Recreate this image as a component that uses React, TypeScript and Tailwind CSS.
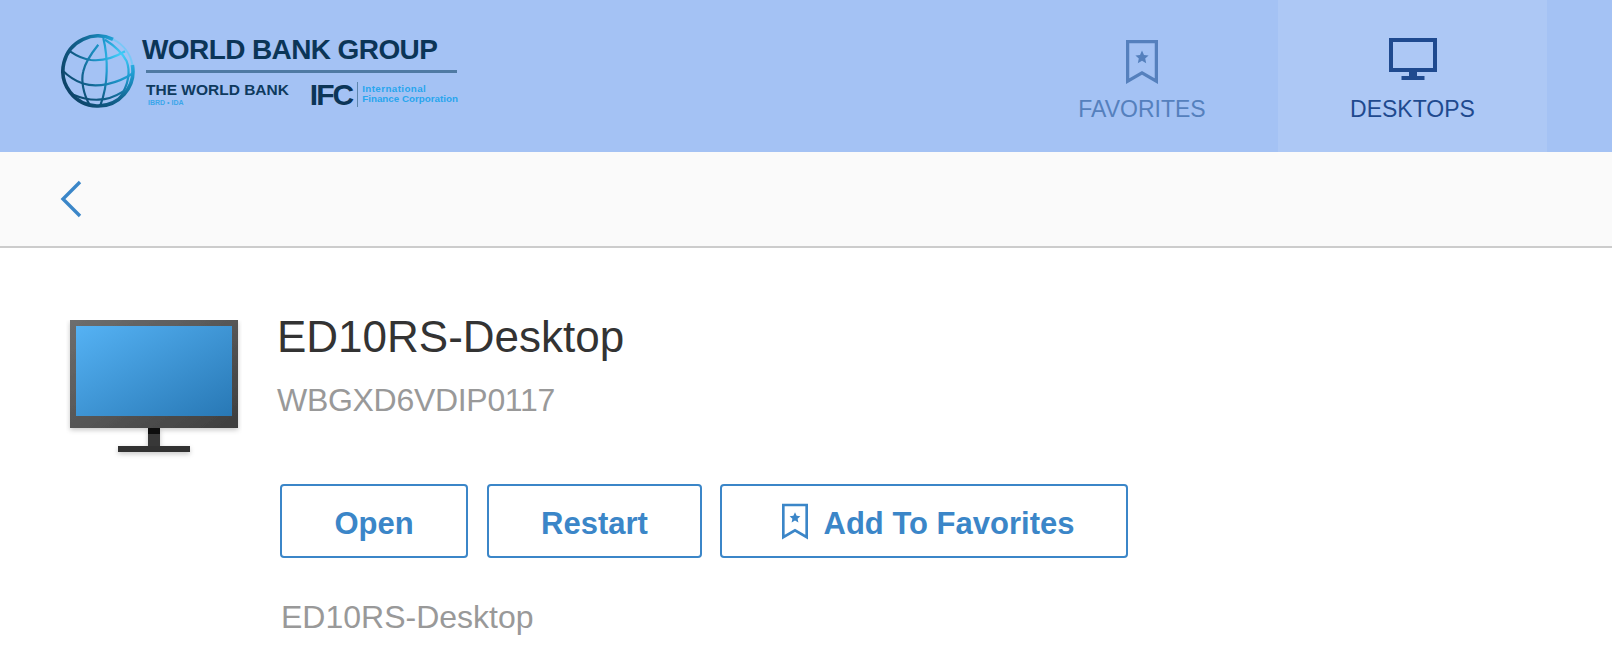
function BookmarkStar({ className, color }: { className?: string; color: string }) {
  return (
    <svg viewBox="0 0 32 44" className={className} fill="none">
      <path d="M1.6 1.7H30.4V41.2L16 32.8L1.6 41.2Z" stroke={color} strokeWidth="3.3" />
      <path
        d="M16 10.5L18 15L22.6 15.5L19.2 18.6L20.2 23.2L16 20.8L11.8 23.2L12.8 18.6L9.4 15.5L14 15Z"
        fill={color}
      />
    </svg>
  )
}

function NavMonitor({ className }: { className?: string }) {
  return (
    <svg viewBox="0 0 48 42" className={className} fill="none">
      <rect x="2" y="2" width="44" height="30" stroke="#1f4a8f" strokeWidth="4" />
      <rect x="20" y="34" width="8" height="4" fill="#1f4a8f" />
      <rect x="12.5" y="38" width="23" height="4" fill="#1f4a8f" />
    </svg>
  )
}

function Globe() {
  return (
    <svg viewBox="0 0 74 74" className="h-[74px] w-[74px] shrink-0" fill="none">
      <defs>
        <radialGradient id="globeStroke" gradientUnits="userSpaceOnUse" cx="60" cy="22" r="72">
          <stop offset="0" stopColor="#43d0fb" />
          <stop offset="0.3" stopColor="#1e9bd0" />
          <stop offset="0.6" stopColor="#11638f" />
          <stop offset="1" stopColor="#0b3557" />
        </radialGradient>
      </defs>
      <g stroke="url(#globeStroke)" strokeWidth="2.2">
        <path d="M37.3 10.7C29 21 24 29 22.3 37.3C20 46 22 60 29 71.3" />
        <path d="M42.3 4C45 15 46 27 45.7 37.3C45.5 50 43 62 39 72.3" />
        <path d="M44 5.7C54 12 62 20 65.7 27.3C69 36 69 50 57.3 65.7" />
        <path d="M9 17.3C16 22 22 25 30 26C40 27 53 24 64 17.3" />
        <path d="M0.7 35.7C7 42 14 47 22 49.5C36 54 56 50 72.3 39" />
        <path d="M12.3 60.7C20 64 29 66 37.3 65.7C46 65.5 55 62 62.3 57.3" />
      </g>
      <path d="M52 5.4A35 35 0 1 0 71.4 31" stroke="url(#globeStroke)" strokeWidth="3.6" />
      <path d="M52 5.4A35 35 0 0 1 71.4 31" stroke="#43d0fb" strokeWidth="2" opacity="0.45" />
    </svg>
  )
}

function Logo() {
  return (
    <div className="flex items-center gap-[7px] font-['Liberation_Sans',Arial,sans-serif]">
      <Globe />
      <div className="flex w-[316px] flex-col">
        <div className="h-[27px] text-[28px] leading-[27px] font-bold tracking-[-0.6px] whitespace-nowrap text-[#0b3557]">
          WORLD BANK GROUP
        </div>
        <div className="mt-[7px] ml-[4px] h-[3px] w-[311px] bg-[#4f7aa3]" />
        <div className="mt-[9px] ml-[4px] flex">
          <div className="w-[164px]">
            <div className="text-[15.5px] leading-[15px] font-bold whitespace-nowrap text-[#0e3a5e]">THE WORLD BANK</div>
            <div className="mt-[2px] ml-[2px] text-[7px] leading-[8px] font-bold text-[#3ba6ea]">IBRD • IDA</div>
          </div>
          <div className="flex items-center">
            <span className="text-[30px] leading-[25px] font-bold tracking-[-2px] text-[#0b3557]">IFC</span>
            <span className="mr-[4px] ml-[5px] h-[25px] w-px bg-[#5d86ad]" />
            <div className="text-[9.8px] leading-[10px] font-bold whitespace-nowrap text-[#28a6ee]">
              <div className="tracking-[0.4px]">International</div>
              <div>Finance Corporation</div>
            </div>
          </div>
        </div>
      </div>
    </div>
  )
}

function DesktopArt() {
  return (
    <svg viewBox="0 0 176 140" className="h-[140px] w-[176px]" fill="none">
      <defs>
        <linearGradient id="bezel" x1="0" y1="0" x2="1" y2="1">
          <stop offset="0" stopColor="#6e6e6e" />
          <stop offset="1" stopColor="#3e3e3e" />
        </linearGradient>
        <linearGradient id="screen" x1="0" y1="0" x2="1" y2="1">
          <stop offset="0" stopColor="#55b2f4" />
          <stop offset="1" stopColor="#2878b5" />
        </linearGradient>
        <filter id="soft" x="-10%" y="-10%" width="120%" height="130%">
          <feDropShadow dx="0" dy="2" stdDeviation="2.5" floodColor="#000" floodOpacity="0.22" />
        </filter>
      </defs>
      <g filter="url(#soft)">
        <rect x="82" y="108" width="12" height="18" fill="#383838" />
        <rect x="82" y="108" width="12" height="6" fill="#0c0c0c" />
        <rect x="52" y="126" width="72" height="6" fill="#333" />
        <rect x="4" y="0" width="168" height="108" fill="url(#bezel)" />
      </g>
      <rect x="10" y="6" width="156" height="90" fill="url(#screen)" />
    </svg>
  )
}

function ActionButton({ children, className }: { children: React.ReactNode; className: string }) {
  return (
    <button
      type="button"
      className={`flex h-[74px] items-center justify-center rounded-[4px] border-2 border-[#3b86c8] bg-white text-[31px] font-bold text-[#3b86c8] ${className}`}
    >
      {children}
    </button>
  )
}

export default function App() {
  return (
    <div className="h-[662px] overflow-hidden bg-white font-['Liberation_Sans',Arial,sans-serif]">
      <header className="flex h-[152px] items-stretch justify-between bg-[#a4c2f4] pr-[65px] pl-[61px]">
        <div className="flex items-center pb-[10px]">
          <Logo />
        </div>
        <nav className="flex">
          <a className="flex w-[269px] flex-col items-center pt-[40px] pr-[3px] text-[23px] leading-[25px] text-[#5580bd]">
            <BookmarkStar className="h-[44px] w-[32px]" color="#5580bd" />
            <span className="mt-[13px]">FAVORITES</span>
          </a>
          <a className="flex w-[269px] flex-col items-center bg-[#adc8f5] pt-[38px] text-[23px] leading-[25px] text-[#1f4a8f]">
            <NavMonitor className="h-[42px] w-[48px]" />
            <span className="mt-[17px]">DESKTOPS</span>
          </a>
        </nav>
      </header>

      <div className="flex h-[96px] items-center border-b-2 border-[#cccccc] bg-[#fafafa] pl-[60px]">
        <svg viewBox="0 0 22 38" className="h-[38px] w-[22px]" fill="none">
          <path d="M20 2L3 19L20 36" stroke="#3b86c8" strokeWidth="3.4" />
        </svg>
      </div>

      <main className="flex pt-[72px] pl-[66px]">
        <div className="w-[211px] shrink-0">
          <DesktopArt />
        </div>
        <div className="flex flex-col">
          <h1 className="-mt-[10px] text-[44px] leading-[54px] font-normal text-[#333333]">ED10RS-Desktop</h1>
          <p className="mt-[18px] text-[32px] leading-[36px] tracking-[-0.3px] text-[#999999]">WBGXD6VDIP0117</p>
          <div className="mt-[66px] ml-[3px] flex gap-[19px]">
            <ActionButton className="w-[188px]">
              <span className="pt-[6px]">Open</span>
            </ActionButton>
            <ActionButton className="w-[215px]">
              <span className="pt-[6px]">Restart</span>
            </ActionButton>
            <ActionButton className="-ml-px w-[408px] gap-[16px] pl-[8px]">
              <BookmarkStar className="h-[37px] w-[26px]" color="#3b86c8" />
              <span className="pt-[6px]">Add To Favorites</span>
            </ActionButton>
          </div>
          <p className="mt-[39px] ml-[4px] text-[32px] leading-[40px] text-[#999999]">ED10RS-Desktop</p>
        </div>
      </main>
    </div>
  )
}
